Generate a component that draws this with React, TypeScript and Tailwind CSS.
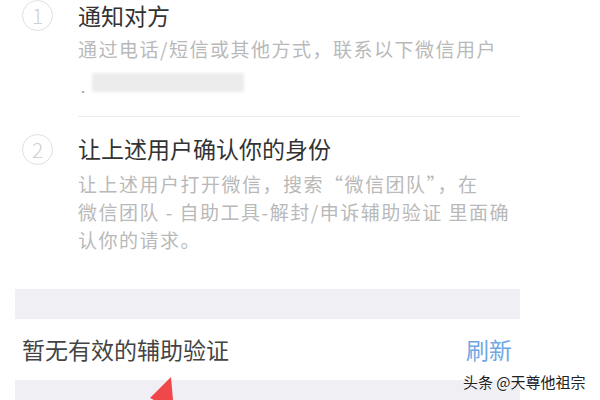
const font = { fontFamily: "'Noto Sans CJK SC', 'Noto Sans', sans-serif" };

const StepCircle = ({ n }: { n: string }) => (
  <div className="w-[31px] h-[31px] shrink-0 rounded-full border-[1.5px] border-[#e0e0e0] flex items-center justify-center text-[21px] font-light leading-none text-[#d0d0d0]">
    {n}
  </div>
);

const App = () => {
  return (
    <div
      className="w-[600px] h-[400px] bg-white overflow-hidden relative flex flex-col"
      style={font}
    >
      {/* 步骤一 */}
      <div className="flex items-start pl-[22px]">
        <StepCircle n="1" />
        <div className="ml-[25px] w-[442px] border-b border-[#ececec]">
          <div className="text-[23px] leading-[30px] text-[#333]">通知对方</div>
          <div className="mt-[5px] text-[19px] leading-[28px] tracking-[1.5px] text-[#b9b9b9]">
            通过电话/短信或其他方式，联系以下微信用户
          </div>
          <div className="h-[53px] flex items-start pt-[10px]">
            <span className="text-[#999] text-[10px] leading-none mt-[14px]">·</span>
            <div className="ml-[4px] w-[152px] h-[19px] bg-[#ececec] blur-[1.5px]" />
          </div>
        </div>
      </div>

      {/* 步骤二 */}
      <div className="flex items-start pl-[22px] mt-[16px]">
        <div className="mt-[1px]">
          <StepCircle n="2" />
        </div>
        <div className="ml-[25px] w-[442px]">
          <div className="text-[23px] leading-[30px] text-[#333]">
            让上述用户确认你的身份
          </div>
          <div className="mt-[7px] text-[19px] leading-[28px] tracking-[1.5px] text-[#b9b9b9] whitespace-nowrap">
            让上述用户打开微信，搜索“微信团队”，在
            <br />
            微信团队 - 自助工具-解封/申诉辅助验证 里面确
            <br />
            认你的请求。
          </div>
        </div>
      </div>

      {/* 辅助验证列表 */}
      <div className="mt-[35px] ml-[15px] w-[505px]">
        <div className="h-[30px] bg-[#efeff4]" />
        <div className="h-[61px] flex items-center justify-between pl-[7px] pr-[8px]">
          <span className="text-[23px] text-[#444]">暂无有效的辅助验证</span>
          <span className="text-[23px] text-[#6fa7e3]">刷新</span>
        </div>
        <div className="h-[30px] bg-[#efeff4]" />
      </div>

      {/* 红色箭头 */}
      <svg className="absolute left-0 top-0 pointer-events-none" width="600" height="400">
        <polygon points="171,377 150,398 154,400 173,400" fill="#f04848" />
      </svg>

      {/* 水印 */}
      <div className="absolute left-[463px] top-[372px] text-[15px] leading-[20px] text-[#222] [text-shadow:0_0_2px_#fff,0_0_2px_#fff]">
        头条 @天尊他祖宗
      </div>
    </div>
  );
};

export default App;
